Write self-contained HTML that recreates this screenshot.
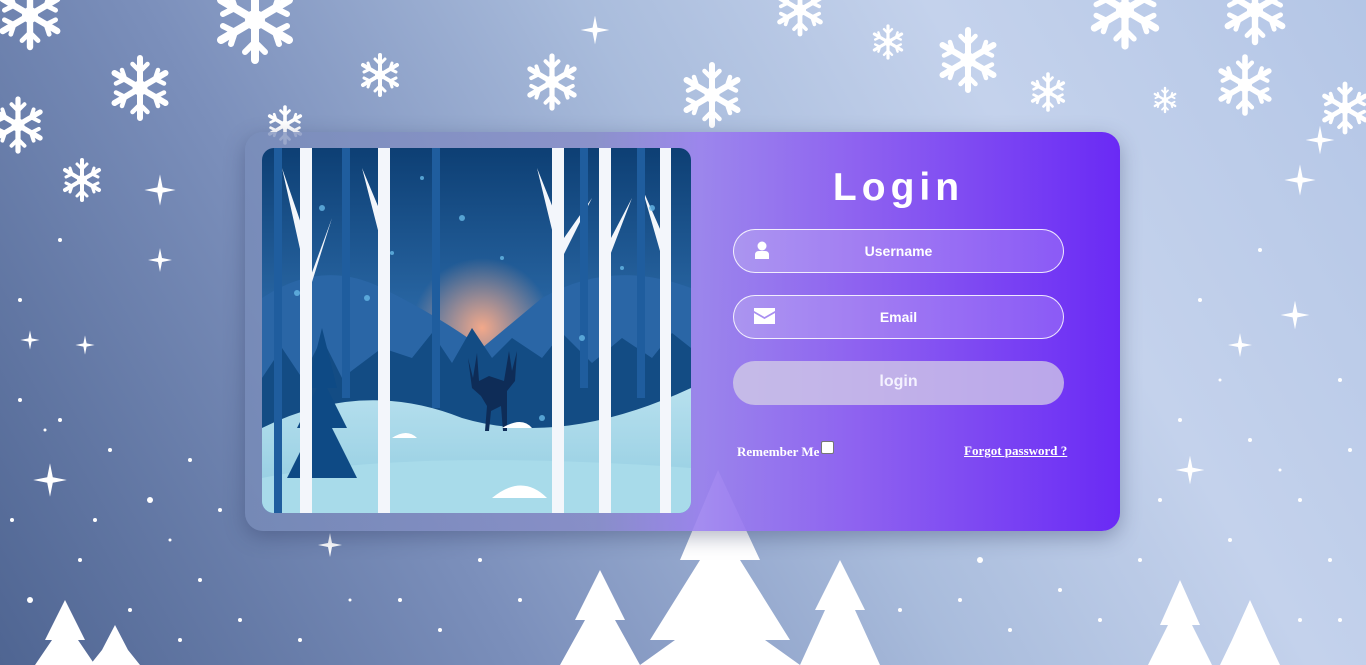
<!DOCTYPE html>
<html><head><meta charset="utf-8"><style>
html,body{margin:0;padding:0;width:1366px;height:665px;overflow:hidden}
body{position:relative;background:linear-gradient(60deg,#4f6592 0%,#7b8fbb 30%,#a9bcdc 55%,#c4d2ec 75%,#b4c6e6 100%);font-family:"Liberation Sans",sans-serif}
.bg{position:absolute;left:0;top:0}
.card{position:absolute;left:245px;top:132px;width:875px;height:399px;border-radius:18px;background:linear-gradient(90deg,rgba(120,140,185,.75) 0%,rgba(135,140,200,.85) 40%,rgba(154,128,238,.9) 52%,#8e62f0 70%,#6a2af5 100%);box-shadow:0 6px 20px rgba(40,50,90,.35)}
.pic{position:absolute;left:262px;top:148px;width:429px;height:365px;border-radius:12px;overflow:hidden}
h1{position:absolute;left:733px;width:331px;top:165px;margin:0;text-align:center;color:#fff;font-size:39px;font-weight:bold;letter-spacing:5px;line-height:46px}
.inp{position:absolute;left:733px;width:329px;height:42px;border:1px solid rgba(255,255,255,.85);border-radius:22px;background:rgba(255,255,255,.18);color:#fff;font-weight:bold;font-size:14px;text-align:center;line-height:42px}
.btn{position:absolute;left:733px;top:361px;width:331px;height:44px;border-radius:22px;background:rgba(215,210,230,.72);color:#f4f2ff;font-weight:bold;font-size:16px;text-align:center;line-height:42px}
.ico{position:absolute;left:20px;top:11px}
.rm{position:absolute;left:737px;top:441px;color:#fff;font:bold 13px "Liberation Serif",serif}
.cb{display:inline-block;width:11px;height:11px;background:#fff;border:1px solid #777;border-radius:2px;vertical-align:2px;margin-left:2px}
.fp{position:absolute;left:964px;top:443px;color:#fff;font:bold 13px "Liberation Serif",serif;text-decoration:underline}
</style></head><body>
<svg class="bg" width="1366" height="665" viewBox="0 0 1366 665">
<defs>
<g id="sf" stroke="#fff" stroke-width="4" fill="none" stroke-linecap="round">
<path d="M0-20V20M-17-10L17 10M-17 10L17-10"/>
<path d="M-5-16L0-11L5-16M-5 16L0 11L5 16M-16-3L-10-6L-12-12M16 3L10 6L12 12M16-3L10-6L12-12M-16 3L-10 6L-12 12" stroke-width="3"/>
<circle r="5" fill="#fff" stroke="none"/>
</g>
<g id="st" fill="#fff"><path d="M0-12L2-2L12 0L2 2L0 12L-2 2L-12 0L-2-2Z"/></g>
</defs>
<g>
<use href="#sf" transform="translate(30,15) scale(1.6)"/>
<use href="#sf" transform="translate(140,88) scale(1.5)"/>
<use href="#sf" transform="translate(255,20) scale(2)"/>
<use href="#sf" transform="translate(18,125) scale(1.3)"/>
<use href="#sf" transform="translate(82,180) scale(1)"/>
<use href="#sf" transform="translate(285,125) scale(.9)"/>
<use href="#sf" transform="translate(380,75) scale(1)"/>
<use href="#sf" transform="translate(552,82) scale(1.3)"/>
<use href="#sf" transform="translate(712,95) scale(1.5)"/>
<use href="#sf" transform="translate(800,10) scale(1.2)"/>
<use href="#sf" transform="translate(888,42) scale(.8)"/>
<use href="#sf" transform="translate(968,60) scale(1.5)"/>
<use href="#sf" transform="translate(1048,92) scale(.9)"/>
<use href="#sf" transform="translate(1125,10) scale(1.8)"/>
<use href="#sf" transform="translate(1245,85) scale(1.4)"/>
<use href="#sf" transform="translate(1345,108) scale(1.2)"/>
<use href="#sf" transform="translate(1255,10) scale(1.6)"/>
<use href="#sf" transform="translate(1165,100) scale(.6)"/>
<use href="#st" transform="translate(160,190) scale(1.3)"/>
<use href="#st" transform="translate(160,260)"/>
<use href="#st" transform="translate(1300,180) scale(1.3)"/>
<use href="#st" transform="translate(1240,345)"/>
<use href="#st" transform="translate(1190,470) scale(1.2)"/>
<use href="#st" transform="translate(50,480) scale(1.4)"/>
<use href="#st" transform="translate(330,545)"/>
<use href="#st" transform="translate(1295,315) scale(1.2)"/>
<use href="#st" transform="translate(1320,140) scale(1.2)"/>
<use href="#st" transform="translate(595,30) scale(1.2)"/>
<use href="#st" transform="translate(30,340) scale(.8)"/>
<use href="#st" transform="translate(85,345) scale(.8)"/>
</g>
<g fill="#fff">
<circle cx="20" cy="400" r="2"/><circle cx="60" cy="420" r="2"/><circle cx="110" cy="450" r="2"/><circle cx="150" cy="500" r="3"/><circle cx="80" cy="560" r="2"/><circle cx="200" cy="580" r="2"/><circle cx="240" cy="620" r="2"/><circle cx="30" cy="600" r="3"/><circle cx="130" cy="610" r="2"/><circle cx="300" cy="640" r="2"/><circle cx="400" cy="600" r="2"/><circle cx="480" cy="560" r="2"/><circle cx="190" cy="460" r="2"/><circle cx="1180" cy="420" r="2"/><circle cx="1250" cy="440" r="2"/><circle cx="1300" cy="500" r="2"/><circle cx="1340" cy="380" r="2"/><circle cx="1140" cy="560" r="2"/><circle cx="1060" cy="590" r="2"/><circle cx="980" cy="560" r="3"/><circle cx="900" cy="610" r="2"/><circle cx="1200" cy="300" r="2"/><circle cx="1260" cy="250" r="2"/><circle cx="1330" cy="560" r="2"/><circle cx="60" cy="240" r="2"/><circle cx="20" cy="300" r="2"/><circle cx="1010" cy="630" r="2"/><circle cx="1300" cy="620" r="2"/>
<circle cx="45" cy="430" r="1.5"/><circle cx="95" cy="520" r="2"/><circle cx="170" cy="540" r="1.5"/><circle cx="220" cy="510" r="2"/><circle cx="12" cy="520" r="2"/><circle cx="60" cy="640" r="2"/><circle cx="180" cy="640" r="2"/><circle cx="350" cy="600" r="1.5"/><circle cx="440" cy="630" r="2"/><circle cx="520" cy="600" r="2"/><circle cx="960" cy="600" r="2"/><circle cx="1100" cy="620" r="2"/><circle cx="1230" cy="540" r="2"/><circle cx="1280" cy="470" r="1.5"/><circle cx="1350" cy="450" r="2"/><circle cx="1220" cy="380" r="1.5"/><circle cx="1160" cy="500" r="2"/><circle cx="1340" cy="620" r="2"/>
</g>
<g fill="#fff">
<path d="M718 470L760 560L740 560L790 640L765 640L800 665L640 665L675 640L650 640L700 560L680 560Z"/>
<path d="M600 570L625 620L615 620L640 665L560 665L585 620L575 620Z"/>
<path d="M840 560L865 610L855 610L880 665L800 665L825 610L815 610Z"/>
<path d="M65 600L85 640L78 640L95 665L35 665L52 640L45 640Z"/>
<path d="M115 625L128 650L140 665L90 665L102 650Z"/>
<path d="M1180 580L1200 625L1192 625L1212 665L1148 665L1168 625L1160 625Z"/>
<path d="M1250 600L1268 640L1280 665L1220 665L1232 640Z"/>
</g>
</svg>
<div class="card"></div>
<svg class="pic" width="429" height="365" viewBox="0 0 429 365">
<defs>
<linearGradient id="sky" x1="0" y1="0" x2="0" y2="1"><stop offset="0" stop-color="#0d3f74"/><stop offset=".55" stop-color="#2f6fae"/><stop offset="1" stop-color="#3f88c4"/></linearGradient>
<radialGradient id="sun" cx=".5" cy=".5" r=".5"><stop offset="0" stop-color="#f2a88a"/><stop offset="1" stop-color="#f2a88a" stop-opacity="0"/></radialGradient>
<linearGradient id="snow" x1="0" y1="0" x2="0" y2="1"><stop offset="0" stop-color="#b7e0ee"/><stop offset="1" stop-color="#8fcbe0"/></linearGradient>
</defs>
<rect width="429" height="365" fill="url(#sky)"/>
<circle cx="220" cy="180" r="70" fill="url(#sun)"/>
<path d="M0 150Q60 110 120 140Q180 170 220 200L280 150Q350 110 429 140V365H0Z" fill="#2a66a6"/>
<path d="M0 230L20 200 40 230 60 190 80 230 120 200 150 210 170 185 190 215 210 180 230 210 250 190 280 210 300 185 330 215 360 190 390 210 410 185 429 200V300H0Z" fill="#134c84"/>
<path d="M0 280Q100 230 200 270Q300 300 429 240V365H0Z" fill="url(#snow)"/>
<path d="M0 330Q150 300 429 320V365H0Z" fill="#a8dbea"/>
<path d="M210 240l-4-30 5 20 4-25 2 28 10-5 15 5 5-30 3 20 5-20-2 30-8 10v40h-4l-2-25-10 5-2 20h-4l2-25-6-10z" fill="#0e2c57"/>
<path d="M60 180L45 240 55 240 35 280 50 280 25 330 95 330 70 280 85 280 65 240 75 240Z" fill="#0e4a85"/>
<path d="M240 280q20-12 30 0z M130 290q15-10 25 0z M230 350q30-25 55 0z" fill="#fff"/>
<g fill="#f3f6fb">
<rect x="38" y="0" width="12" height="365"/><rect x="116" y="0" width="12" height="365"/><rect x="290" y="0" width="12" height="365"/><rect x="337" y="0" width="12" height="365"/><rect x="398" y="0" width="11" height="365"/>
<path d="M40 110L20 20 44 90Z M45 150L70 70 48 130Z M118 90L100 20 121 70Z M292 90L275 20 295 70Z M300 110L330 50 302 90Z M347 110L370 50 349 90Z M400 110L380 40 402 90Z"/>
</g>
<g fill="#1f5d9e"><rect x="12" y="0" width="8" height="365"/><rect x="80" y="0" width="8" height="250"/><rect x="170" y="0" width="8" height="260"/><rect x="318" y="0" width="8" height="240"/><rect x="375" y="0" width="8" height="250"/></g>
<g fill="#66b8e6" opacity=".8"><circle cx="60" cy="60" r="3"/><circle cx="200" cy="70" r="3"/><circle cx="130" cy="105" r="2"/><circle cx="240" cy="110" r="2"/><circle cx="35" cy="145" r="3"/><circle cx="105" cy="150" r="3"/><circle cx="160" cy="30" r="2"/><circle cx="390" cy="60" r="3"/><circle cx="360" cy="120" r="2"/><circle cx="320" cy="190" r="3"/><circle cx="280" cy="270" r="3"/></g>
</svg>
<h1>Login</h1>
<div class="inp" style="top:229px">
<svg class="ico" width="16" height="18" viewBox="0 0 16 18"><circle cx="8" cy="5" r="4.5" fill="#fff"/><path d="M1 18V14Q1 10 5 10H11Q15 10 15 14V18Z" fill="#fff"/></svg>Username</div>
<div class="inp" style="top:295px">
<svg class="ico" width="21" height="16" viewBox="0 0 21 16" style="top:12px"><path d="M0 0H21V3L10.5 9L0 3Z M0 5L10.5 11L21 5V16H0Z" fill="#fff"/></svg>Email</div>
<div class="btn">login</div>
<div class="rm">Remember Me<span class="cb"></span></div>
<div class="fp">Forgot password ?</div>
</body></html>
